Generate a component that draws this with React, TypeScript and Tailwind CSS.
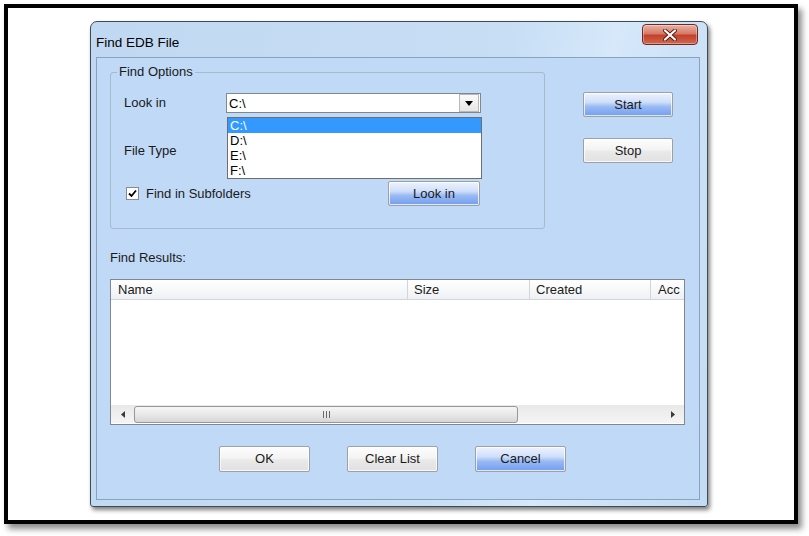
import React from 'react';

const Button = ({ label, blue, className }: { label: string; blue?: boolean; className?: string }) => (
  <div
    className={`flex items-center justify-center border border-[#a0a0a0] rounded-[2px] text-[13px] text-[#1a1a1a] shadow-[inset_0_0_0_1px_rgba(255,255,255,0.75)] ${
      blue
        ? 'bg-[linear-gradient(#eef3fd,#cfdffa_40%,#98b9f3_60%,#729ff0)]'
        : 'bg-[linear-gradient(#fdfdfd,#f4f4f4_45%,#e9e9e9_55%,#e1e1e1)]'
    } ${className ?? ''}`}
  >
    {label}
  </div>
);

const CloseButton = () => (
  <div className="absolute top-[2px] right-[9px] w-[56px] h-[21px] rounded-[4px] border border-[#6b2a22] bg-[linear-gradient(#e8b3a6,#d77a66_45%,#c2412b_55%,#d0674f)] flex items-center justify-center shadow-[inset_0_0_0_1px_rgba(255,255,255,0.35)]">
    <svg width="14" height="12" viewBox="0 0 14 12">
      <path d="M2 1.5 L12 10.5 M12 1.5 L2 10.5" stroke="#5a1a12" strokeWidth="4" strokeLinecap="round" />
      <path d="M2 1.5 L12 10.5 M12 1.5 L2 10.5" stroke="#ffffff" strokeWidth="2.2" strokeLinecap="round" />
    </svg>
  </div>
);

const ComboBox = () => (
  <div className="w-[255px] h-[20px] bg-white border border-[#7f8790] flex items-center">
    <span className="flex-1 pl-[2px] text-[13px] leading-[15px] text-black">C:\</span>
    <div className="w-[20px] h-[18px] mr-[1px] border border-[#b8b8b8] bg-[linear-gradient(#fafafa,#e6e6e6)] flex items-center justify-center">
      <svg width="8" height="5" viewBox="0 0 8 5">
        <path d="M0 0 H8 L4 5 Z" fill="#000" />
      </svg>
    </div>
  </div>
);

const DropList = () => (
  <div className="absolute left-[116px] top-[44px] w-[255px] h-[62px] bg-white border border-[#6e6e6e] text-[13px] leading-[15px] text-black">
    <div className="bg-[#3399ff] text-white pl-[2px]">C:\</div>
    <div className="pl-[2px]">D:\</div>
    <div className="pl-[2px]">E:\</div>
    <div className="pl-[2px]">F:\</div>
  </div>
);

const Checkbox = () => (
  <div className="w-[13px] h-[13px] border border-[#8a8a8a] bg-white flex items-center justify-center">
    <svg width="9" height="9" viewBox="0 0 9 9">
      <path d="M1 4.5 L3.5 7 L8 1.5" stroke="#000" strokeWidth="1.8" fill="none" />
    </svg>
  </div>
);

const ListView = () => (
  <div className="w-[575px] h-[146px] bg-white border border-[#7f8790] flex flex-col text-[13px] text-[#1a1a1a]">
    <div className="h-[20px] flex overflow-hidden bg-[linear-gradient(#ffffff,#f7f8fa_50%,#eef0f3)] border-b border-[#d0d6de]">
      <div className="w-[297px] shrink-0 pl-[7px] leading-[20px] border-r border-[#d5d5d5]">Name</div>
      <div className="w-[122px] shrink-0 pl-[6px] leading-[20px] border-r border-[#d5d5d5]">Size</div>
      <div className="w-[121px] shrink-0 pl-[6px] leading-[20px] border-r border-[#d5d5d5]">Created</div>
      <div className="w-[33px] shrink-0 pl-[7px] leading-[20px]">Acc</div>
    </div>
    <div className="flex-1" />
    <div className="h-[18px] mb-[1px] flex items-center bg-[linear-gradient(#e9e9e9,#f4f4f4)]">
      <div className="w-[23px] flex items-center justify-center">
        <svg width="4" height="7" viewBox="0 0 4 7">
          <path d="M4 0 V7 L0 3.5 Z" fill="#3a3a3a" />
        </svg>
      </div>
      <div className="w-[384px] h-[17px] rounded-[3px] border border-[#979797] bg-[linear-gradient(#f6f6f6,#e8e8e8_50%,#d6d6d6)] flex items-center justify-center gap-[2px]">
        <div className="w-[1px] h-[7px] bg-[#6a6a6a]" />
        <div className="w-[1px] h-[7px] bg-[#6a6a6a]" />
        <div className="w-[1px] h-[7px] bg-[#6a6a6a]" />
      </div>
      <div className="flex-1" />
      <div className="w-[23px] flex items-center justify-center">
        <svg width="4" height="7" viewBox="0 0 4 7">
          <path d="M0 0 V7 L4 3.5 Z" fill="#3a3a3a" />
        </svg>
      </div>
    </div>
  </div>
);

export default function App() {
  return (
    <div className="w-[809px] h-[536px] bg-white pt-[4px] pl-[4px] font-['Liberation_Sans',Arial,sans-serif]">
      <div className="w-[794px] h-[520px] border-[4px] border-black shadow-[4px_5px_6px_rgba(0,0,0,0.45)] pl-[82px] pt-[13px]">
        <div className="relative w-[618px] h-[486px] border border-[#3f4a55] rounded-t-[7px] rounded-b-[3px] bg-[linear-gradient(100deg,#c0d8f1,#c7def5_60%,#d6e8fa_75%,#c3dbf3)] shadow-[2px_3px_4px_rgba(0,0,0,0.5)] flex flex-col">
          <CloseButton />
          <div className="h-[35px] shrink-0 pl-[5px] pt-[13px] text-[13.5px] leading-[16px] text-black">Find EDB File</div>
          <div className="ml-[5px] w-[604px] h-[443px] border border-[#8aa3bd] bg-[#bfd9f6] pl-[13px] pt-[14px] flex flex-col text-[13px] text-[#1a1a1a]">
            <div className="flex">
              <div className="relative w-[435px] h-[157px] border border-[#a7b9cb] rounded-[3px] pl-[13px]">
                <div className="absolute -top-[9px] left-[6px] px-[2px] bg-[#bfd9f6] leading-[16px]">Find Options</div>
                <div className="flex items-center mt-[20px] h-[20px]">
                  <div className="w-[102px] leading-[16px]">Look in</div>
                  <ComboBox />
                </div>
                <div className="flex items-center mt-[28px] h-[20px] leading-[16px]">File Type</div>
                <div className="w-[356px] mt-[20px] h-[25px] flex items-center">
                  <div className="ml-[2px]">
                    <Checkbox />
                  </div>
                  <div className="ml-[7px] leading-[16px]">Find in Subfolders</div>
                  <Button label="Look in" blue className="ml-auto w-[92px] h-[25px]" />
                </div>
                <DropList />
              </div>
              <div className="ml-[38px] pt-[20px] flex flex-col gap-[21px]">
                <Button label="Start" blue className="w-[90px] h-[25px]" />
                <Button label="Stop" className="w-[90px] h-[25px]" />
              </div>
            </div>
            <div className="mt-[21px] leading-[16px]">Find Results:</div>
            <div className="mt-[13px]">
              <ListView />
            </div>
            <div className="mt-[21px] pl-[109px] flex gap-[37px]">
              <Button label="OK" className="w-[91px] h-[26px]" />
              <Button label="Clear List" className="w-[91px] h-[26px]" />
              <Button label="Cancel" blue className="w-[91px] h-[26px]" />
            </div>
          </div>
        </div>
      </div>
    </div>
  );
}
